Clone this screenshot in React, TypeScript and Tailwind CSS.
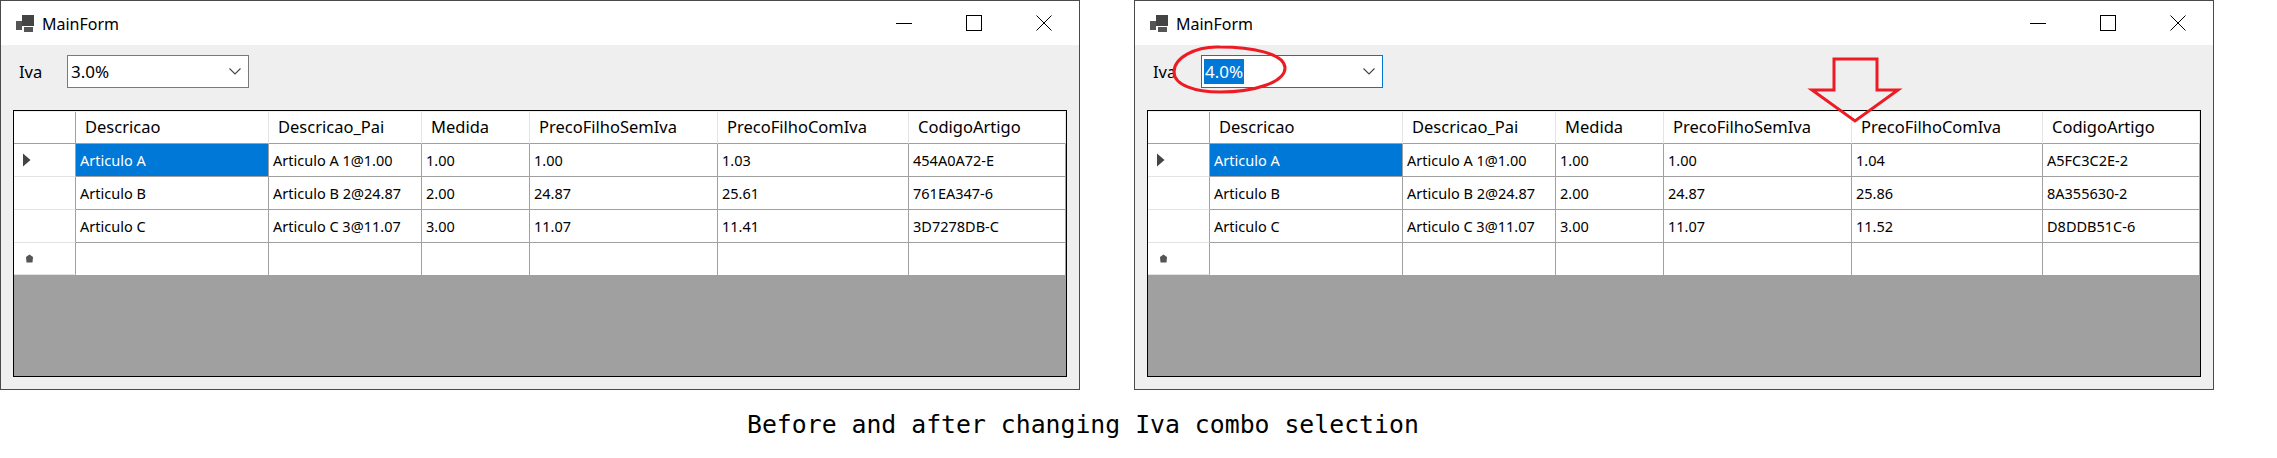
type Row = { name: string; pai: string; medida: string; sem: string; com: string; codigo: string }

const headers = ["Descricao", "Descricao_Pai", "Medida", "PrecoFilhoSemIva", "PrecoFilhoComIva", "CodigoArtigo"]

const before: Row[] = [
  { name: "Articulo A", pai: "Articulo A 1@1.00", medida: "1.00", sem: "1.00", com: "1.03", codigo: "454A0A72-E" },
  { name: "Articulo B", pai: "Articulo B 2@24.87", medida: "2.00", sem: "24.87", com: "25.61", codigo: "761EA347-6" },
  { name: "Articulo C", pai: "Articulo C 3@11.07", medida: "3.00", sem: "11.07", com: "11.41", codigo: "3D7278DB-C" },
]

const after: Row[] = [
  { name: "Articulo A", pai: "Articulo A 1@1.00", medida: "1.00", sem: "1.00", com: "1.04", codigo: "A5FC3C2E-2" },
  { name: "Articulo B", pai: "Articulo B 2@24.87", medida: "2.00", sem: "24.87", com: "25.86", codigo: "8A355630-2" },
  { name: "Articulo C", pai: "Articulo C 3@11.07", medida: "3.00", sem: "11.07", com: "11.52", codigo: "D8DDB51C-6" },
]

const columns = "grid grid-cols-[62px_193px_153px_108px_188px_191px_157px]"

function AppIcon() {
  return (
    <svg width="18" height="17" viewBox="0 0 18 17" className="shrink-0">
      <rect x="0" y="6" width="6" height="9" fill="#555" />
      <rect x="6" y="0" width="12" height="11" fill="#444" />
      <rect x="8" y="12" width="9" height="5" fill="#555" />
    </svg>
  )
}

// caption buttons, Windows 10 style
function WindowButtons() {
  return (
    <div className="ml-auto flex items-center gap-[54px] pr-[27px]">
      <svg width="16" height="16" viewBox="0 0 16 16">
        <path d="M0 8.5 H16" stroke="#000" strokeWidth="1" />
      </svg>
      <svg width="16" height="16" viewBox="0 0 16 16">
        <rect x="0.5" y="0.5" width="15" height="15" fill="none" stroke="#000" strokeWidth="1" />
      </svg>
      <svg width="16" height="16" viewBox="0 0 16 16">
        <path d="M0.5 0.5 L15.5 15.5 M15.5 0.5 L0.5 15.5" stroke="#000" strokeWidth="1" />
      </svg>
    </div>
  )
}

function DataRow({ row, index }: { row: Row; index: number }) {
  const cells = [row.name, row.pai, row.medida, row.sem, row.com, row.codigo]
  return (
    <div className={`${columns} h-[33px]`}>
      <div className="flex items-center border-r border-b border-r-[#a0a0a0] border-b-[#e3e3e3] bg-white pl-2">
        {index === 0 && (
          <svg width="9" height="14" viewBox="0 0 9 14">
            <path d="M1 0.5 L8.5 7 L1 13.5 Z" fill="#444" />
          </svg>
        )}
      </div>
      {cells.map((text, i) => (
        <div
          key={i}
          className={`flex items-center border-r border-b border-[#a0a0a0] pl-1 pt-[2px] text-[14.5px] ${
            index === 0 && i === 0 ? "bg-[#0078d7] text-white" : "bg-white text-black"
          }`}
        >
          {text}
        </div>
      ))}
    </div>
  )
}

function MainForm({ rows, value, focused }: { rows: Row[]; value: string; focused?: boolean }) {
  return (
    <div className="flex h-[390px] w-[1080px] shrink-0 flex-col border border-[#4a4a4a] bg-[#efefef] font-['Noto_Sans',sans-serif]">
      <div className="flex h-[44px] items-center bg-white pl-[15px]">
        <AppIcon />
        <span className="ml-2 pt-[2px] text-[16px] text-black">MainForm</span>
        <WindowButtons />
      </div>

      <div className="flex h-[65px] items-start pl-[18px] pt-[10px]">
        <span className="mt-[5px] w-[48px] text-[16.5px] text-black">Iva</span>
        <div
          className={`flex h-[33px] w-[182px] items-center justify-between border bg-white pl-[2px] pr-[7px] text-[17px] ${
            focused ? "border-[#0078d7]" : "border-[#7a7a7a]"
          }`}
        >
          <span className={focused ? "bg-[#0078d7] px-[1px] text-white" : "px-[1px] text-black"}>{value}</span>
          <svg width="12" height="7" viewBox="0 0 12 7">
            <path d="M0.5 0.5 L6 6 L11.5 0.5" fill="none" stroke="#444" strokeWidth="1.1" />
          </svg>
        </div>
      </div>

      <div className="mx-3 flex h-[267px] flex-col border border-black bg-[#a0a0a0]">
        <div className={`${columns} h-[33px] border-t border-[#f0f0f0] bg-white`}>
          <div className="border-r border-b border-r-[#a0a0a0] border-b-[#a0a0a0]" />
          {headers.map((h) => (
            <div key={h} className="flex items-center border-r border-b border-r-[#e4e4e4] border-b-[#a0a0a0] pl-[9px] text-[16.5px] text-black">
              {h}
            </div>
          ))}
        </div>
        {rows.map((row, i) => (
          <DataRow key={row.name} row={row} index={i} />
        ))}
        <div className={`${columns} h-[32px]`}>
          <div className="flex items-center border-r border-b border-r-[#a0a0a0] border-b-[#e3e3e3] bg-white pl-[11px]">
            <svg width="9" height="9" viewBox="0 0 9 9">
              <path d="M4.5 0.5 L8 3 L7.5 8.5 L1.5 8.5 L1 3 Z" fill="#555" />
            </svg>
          </div>
          {headers.map((h) => (
            <div key={h} className="border-r border-[#a0a0a0] bg-white" />
          ))}
        </div>
      </div>
    </div>
  )
}

export default function App() {
  return (
    <div className="relative h-[458px] w-[2277px] overflow-hidden bg-white">
      <div className="flex gap-[54px]">
        <MainForm rows={before} value="3.0%" />
        <MainForm rows={after} value="4.0%" focused />
      </div>

      <p className="ml-[747px] mt-[17px] font-['DejaVu_Sans_Mono',monospace] text-[24.8px] leading-[36px] text-black">
        Before and after changing Iva combo selection
      </p>

      {/* red annotations drawn over the second window */}
      <svg className="absolute left-[1165px] top-[40px]" width="130" height="60" viewBox="0 0 130 60">
        <path
          d="M9 32 C9 18 30 6 55 7 C85 7 120 13 120 28 C120 42 90 52 55 52 C30 52 9 45 9 32 Z"
          fill="none"
          stroke="#ed1c24"
          strokeWidth="3"
        />
      </svg>
      <svg className="absolute left-[1805px] top-[52px]" width="100" height="76" viewBox="0 0 100 76">
        <path
          d="M29 7 L72 7 L72 38 L93 38 L50 69 L7 38 L29 38 Z"
          fill="none"
          stroke="#ed1c24"
          strokeWidth="3"
        />
      </svg>
    </div>
  )
}
